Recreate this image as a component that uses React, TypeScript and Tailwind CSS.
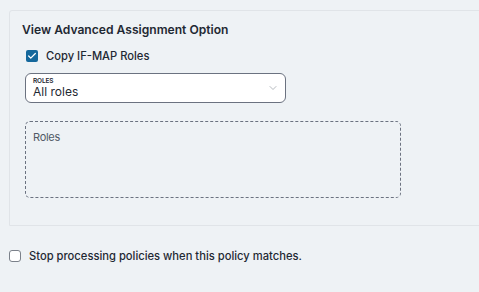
import { ChevronDown, Check } from "lucide-react";

export default function App() {
  return (
    <div
      className="w-[479px] h-[292px] overflow-hidden bg-[#eef2f5] text-[#1f2933]"
      style={{ fontFamily: "Inter, 'Liberation Sans', sans-serif" }}
    >
      <div className="pt-[10px] pl-[9px]">
        {/* Advanced panel */}
        <section className="w-[500px] h-[216px] border border-[#e0e4e8] rounded-tl-[3px] pl-[12px] pt-[10px]">
          <h3 className="text-[12.1px] font-semibold leading-[18px] text-[#1f2933]">
            View Advanced Assignment Option
          </h3>

          <label className="mt-[8px] ml-[4px] flex items-center gap-[8px]">
            <span className="w-[12px] h-[12px] rounded-[2px] bg-[#15689c] flex items-center justify-center">
              <Check size={10} strokeWidth={3} className="text-white" />
            </span>
            <span className="text-[11.2px] font-medium leading-[18px]">Copy IF-MAP Roles</span>
          </label>

          <div className="mt-[8px] ml-[3px] w-[261px] h-[30px] bg-white border border-[#6b7280] rounded-[6px] flex items-center justify-between pl-[7px] pr-[6px]">
            <div className="flex flex-col leading-none">
              <span className="text-[6.5px] font-semibold tracking-tight text-[#1f2933] leading-[8px]">ROLES</span>
              <span className="text-[12px] leading-[14px] text-[#1f2933]">All roles</span>
            </div>
            <ChevronDown size={12} strokeWidth={1.25} className="text-[#8a9099]" />
          </div>

          <div className="mt-[18px] ml-[3px] w-[376px] h-[77px] border border-dashed border-[#6b7280] rounded-[5px] px-[7px] pt-[8px]">
            <span className="block text-[11px] leading-[14px] text-[#515a66] tracking-tight">Roles</span>
          </div>
        </section>

        {/* Stop processing */}
        <label className="mt-[22px] flex items-center gap-[8px]">
          <span className="w-[12px] h-[12px] rounded-[3px] bg-white border border-[#7b818a]" />
          <span className="text-[11.2px] font-medium leading-[16px]">
            Stop processing policies when this policy matches.
          </span>
        </label>
      </div>
    </div>
  );
}
